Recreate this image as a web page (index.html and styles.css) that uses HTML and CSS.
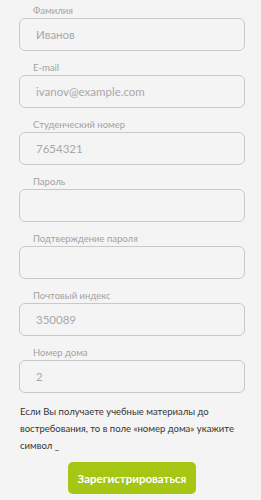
FILE: index.html
```html
<!DOCTYPE html>
<html lang="ru">
<head>
<meta charset="utf-8">
<link rel="stylesheet" href="styles.css">
</head>
<body>
<form class="form">
  <div class="field">
    <label class="label">Фамилия</label>
    <div class="input">Иванов</div>
  </div>
  <div class="field">
    <label class="label">E-mail</label>
    <div class="input">ivanov@example.com</div>
  </div>
  <div class="field">
    <label class="label">Студенческий номер</label>
    <div class="input">7654321</div>
  </div>
  <div class="field">
    <label class="label">Пароль</label>
    <div class="input"></div>
  </div>
  <div class="field">
    <label class="label">Подтверждение пароля</label>
    <div class="input"></div>
  </div>
  <div class="field">
    <label class="label">Почтовый индекс</label>
    <div class="input">350089</div>
  </div>
  <div class="field">
    <label class="label">Номер дома</label>
    <div class="input">2</div>
  </div>
  <p class="note">Если Вы получаете учебные материалы до востребования, то в поле «номер дома» укажите символ _</p>
  <div class="actions">
    <button type="button" class="btn">Зарегистрироваться</button>
  </div>
</form>
</body>
</html>
```
FILE: styles.css
```css
html, body {
  margin: 0;
  padding: 0;
  background: #f4f4f4;
}
body {
  font-family: Lato, "Open Sans", "Liberation Sans", sans-serif;
}
.form {
  width: 226px;
  margin: 0 0 0 19px;
  padding-top: 4px;
  display: flex;
  flex-direction: column;
  gap: 10px;
}
.field {
  display: flex;
  flex-direction: column;
}
.label {
  display: block;
  font-size: 9.5px;
  line-height: 14px;
  color: #a3a3a3;
  padding-left: 14px;
}
.input {
  box-sizing: border-box;
  height: 33px;
  border: 1px solid #c9c9c9;
  border-radius: 6px;
  background: #f4f4f4;
  padding-left: 16px;
  font-size: 11.5px;
  line-height: 31px;
  color: #a8a8a8;
}
.note {
  margin: 0;
  padding-left: 1px;
  font-size: 9.5px;
  line-height: 17px;
  color: #333;
}
.actions {
  display: flex;
  justify-content: center;
  margin-top: -2px;
}
.btn {
  width: 128px;
  height: 32px;
  border: none;
  border-radius: 5px;
  background: #a5c612;
  color: #fff;
  font-family: Lato, "Open Sans", "Liberation Sans", sans-serif;
  font-weight: 700;
  font-size: 11.5px;
  padding: 0;
}
```
